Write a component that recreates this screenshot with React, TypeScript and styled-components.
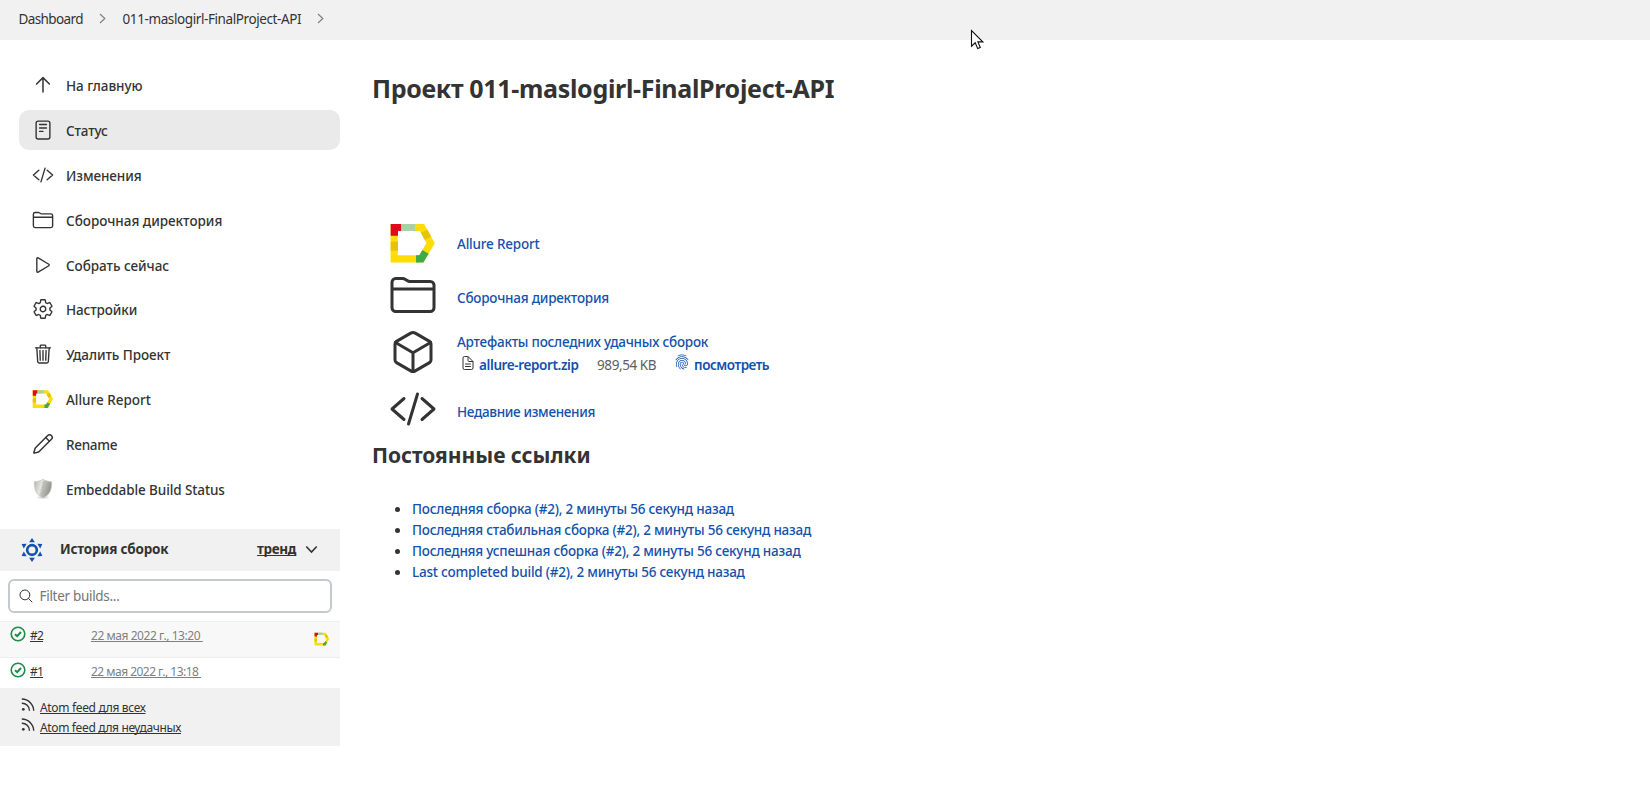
import React from "react";
import styled, { createGlobalStyle } from "styled-components";
import {
  IoCodeSlashOutline,
  IoCubeOutline,
  IoDocumentTextOutline,
  IoFingerPrintOutline,
  IoFolderOutline,
  IoPlayOutline,
  IoReaderOutline,
  IoSearchOutline,
  IoSettingsOutline,
  IoTrashOutline,
} from "react-icons/io5";
import { Pencil } from "lucide-react";

const GlobalStyle = createGlobalStyle`
  body {
    margin: 0;
    background: #fff;
    color: #333;
    font-family: "Noto Sans", "Open Sans", sans-serif;
    font-size: 13.5px;
  }
  * { box-sizing: border-box; }
  svg { display: block; flex: none; }
`;

const Page = styled.div`
  position: relative;
  min-height: 807px;
  overflow: hidden;
`;

const Breadcrumbs = styled.nav`
  display: flex;
  align-items: center;
  height: 40px;
  padding: 0 0 3px 18.5px;
  background: #f1f1f1;
  line-height: 20px;
`;

const Crumb = styled.a<{ $ls: number }>`
  letter-spacing: ${(p) => p.$ls}px;
  white-space: nowrap;
`;

const CrumbSeparator = styled.svg`
  margin: 0 16.5px 1px 16px;
`;

const Columns = styled.div`
  display: flex;
  align-items: flex-start;
`;

const Sidebar = styled.aside`
  width: 340px;
  padding-top: 25px;
`;

const Tasks = styled.div`
  display: flex;
  flex-direction: column;
  gap: 4.9px;
  margin: 0 0 19.9px 19px;
`;

const Task = styled.a<{ $active?: boolean }>`
  display: flex;
  align-items: center;
  gap: 12px;
  height: 40px;
  padding-left: 13px;
  border-radius: 10px;
  background: ${(p) => (p.$active ? "#eaeaea" : "transparent")};
`;

const TaskLabel = styled.span<{ $ls: number }>`
  padding-top: 2px;
  font-weight: 500;
  line-height: 20px;
  letter-spacing: ${(p) => p.$ls}px;
  white-space: nowrap;
`;

const HistoryHeader = styled.div`
  display: flex;
  align-items: center;
  height: 42px;
  padding: 0 22px 0 21px;
  background: #f1f1f1;
  font-weight: 700;
  line-height: 20px;
`;

const HistoryTitle = styled.span`
  padding-bottom: 2px;
  margin-left: 17px;
  letter-spacing: -0.22px;
`;

const Trend = styled.a`
  padding-bottom: 2px;
  margin: 0 9px 0 auto;
  letter-spacing: -0.36px;
  text-decoration: underline;
  text-decoration-skip-ink: none;
`;

const Filter = styled.label`
  display: flex;
  align-items: center;
  gap: 6px;
  height: 34px;
  margin: 8px;
  padding-left: 7.5px;
  border: 2px solid #c3c9ce;
  border-radius: 6px;
  color: #333;
`;

const FilterHint = styled.span`
  padding-top: 1px;
  color: #757575;
  letter-spacing: -0.3px;
`;

const Build = styled.div<{ $height: number; $odd?: boolean }>`
  display: flex;
  align-items: flex-start;
  height: ${(p) => p.$height}px;
  padding: 4px 10px 0;
  border-top: 1px solid #eeeeee;
  background: ${(p) => (p.$odd ? "#f8f8f8" : "#fff")};
  font-size: 12px;
  line-height: 20px;
`;

const BuildNumber = styled.a`
  width: 61px;
  margin-left: 4px;
  letter-spacing: -0.8px;
  text-decoration: underline;
`;

const BuildDate = styled.a<{ $ls: number }>`
  color: #808080;
  letter-spacing: ${(p) => p.$ls}px;
  text-decoration: underline;
  text-decoration-skip-ink: none;
  white-space: pre;
`;

const BuildBadge = styled.span`
  margin: 5px 0 0 auto;
`;

const Feeds = styled.div`
  height: 58px;
  padding: 10px 0 0 21px;
  background: #f1f1f1;
`;

const Feed = styled.a<{ $ls: number }>`
  display: flex;
  gap: 5px;
  height: 20px;
  font-size: 12px;
  line-height: 20px;
  letter-spacing: ${(p) => p.$ls}px;
  text-decoration: underline;
  text-decoration-skip-ink: none;
`;

const Main = styled.main`
  padding: 31px 0 0 32px;
`;

const Title = styled.h1`
  margin: 0 0 111px;
  font-size: 25px;
  font-weight: 700;
  line-height: 34px;
  letter-spacing: -0.315px;
`;

const Subtitle = styled.h2`
  margin: 0 0 29px;
  font-size: 21px;
  font-weight: 700;
  line-height: 30px;
  letter-spacing: -0.03px;
`;

const Summary = styled.div<{ $height: number }>`
  display: flex;
  align-items: center;
  gap: 20px;
  height: ${(p) => p.$height}px;
  padding-left: 17px;
`;

const SummaryIcon = styled.span<{ $lift?: number }>`
  padding-bottom: ${(p) => p.$lift ?? 0}px;
`;

const Link = styled.a<{ $ls: number; $strong?: boolean }>`
  color: #1351ab;
  font-weight: ${(p) => (p.$strong ? 600 : 500)};
  line-height: 23px;
  letter-spacing: ${(p) => p.$ls}px;
  white-space: nowrap;
`;

const SummaryText = styled.div`
  padding-top: 2px;
`;

const Artifact = styled.div`
  display: flex;
  align-items: center;
  height: 24px;
  padding-left: 3px;
`;

const FileIcon = styled.span<{ $blue?: boolean }>`
  padding-bottom: ${(p) => (p.$blue ? 7 : 5)}px;
  margin-right: ${(p) => (p.$blue ? 4 : 3)}px;
  color: ${(p) => (p.$blue ? "#1351ab" : "#333")};
`;

const FileSize = styled.span`
  width: 77px;
  margin-left: 18.5px;
  padding-bottom: 1px;
  color: #5c5c64;
  letter-spacing: -0.43px;
`;

const Permalinks = styled.ul`
  margin: 0;
  padding: 0 0 0 23px;
  list-style: none;
`;

const Permalink = styled.li`
  display: flex;
  align-items: center;
  gap: 12px;
  height: 21px;
  &::before {
    content: "";
    width: 5px;
    height: 5px;
    border-radius: 50%;
    background: #333;
  }
`;

const Pointer = styled.svg`
  position: absolute;
  left: 970px;
  top: 29px;
`;

const AllureIcon = ({ size }: { size: number }) => (
  <svg width={size} height={size} viewBox="57 27 144 144" fill="none">
    <path d="M72.5 52.5H156L182 99.5L154 146.5H72.5Z" stroke="#ffdc05" strokeWidth="21.5" />
    <path d="M62 42H93V63H84V77H62Z" fill="#e0081a" />
    <path d="M93 42H135V63H93Z" fill="#a5d3a2" />
    <path d="M62 95H84V122H62Z" fill="#e4c40a" />
    <path d="M162.500 64L174 85" stroke="#e4c40a" strokeWidth="21.5" />
    <path d="M138 146.500H154L166.500 125.500" stroke="#3fab45" strokeWidth="21.5" />
  </svg>
);

const UpIcon = () => (
  <svg width="22" height="22" viewBox="0 0 22 22" fill="none" stroke="#333" strokeWidth="1.500" strokeLinecap="round" strokeLinejoin="round">
    <path d="M4.600 10L11 3.600L17.400 10M11 4V18" />
  </svg>
);

const ShieldIcon = () => (
  <svg width="22" height="22" viewBox="0 0 22 22">
    <defs>
      <linearGradient id="shield" x1="0" x2="1" y1="0" y2="0.3">
        <stop offset="0" stopColor="#b4b4ae" />
        <stop offset="0.45" stopColor="#e6e6e1" />
        <stop offset="0.55" stopColor="#c4c4be" />
        <stop offset="1" stopColor="#92928d" />
      </linearGradient>
    </defs>
    <ellipse cx="11" cy="19.500" rx="6" ry="1.500" fill="#e3e3e3" />
    <path
      d="M11 1.300C8.500 3 5 3.700 2.300 3.700C2.300 10 3 16.500 11 20C19 16.500 19.700 10 19.700 3.700C17 3.700 13.500 3 11 1.300Z"
      fill="url(#shield)"
      stroke="#c9c9c5"
      strokeWidth="0.8"
    />
    <path d="M11 4V17" stroke="#a2a29d" strokeWidth="0.8" strokeDasharray="1 1.500" />
  </svg>
);

const HistoryIcon = () => (
  <svg width="22" height="24" viewBox="-33 -36 66 72">
    <circle r="14.500" fill="none" stroke="#1351ab" strokeWidth="8" />
    {[0, 60, 120, 180, 240, 300].map((angle) => (
      <path key={angle} d="M0 -36L8.500 -23.500H-8.500Z" fill="#1351ab" transform={`rotate(${angle})`} />
    ))}
  </svg>
);

const SuccessIcon = () => (
  <svg width="16" height="16" viewBox="0 0 16 16" fill="none" stroke="#1e8a4a">
    <circle cx="8" cy="8" r="6.800" strokeWidth="1.600" />
    <path d="M5 8.200L7.200 10.200L11 6" strokeWidth="2" />
  </svg>
);

const FeedIcon = () => (
  <svg width="14" height="14" viewBox="0 0 14 14" fill="none" stroke="#333" strokeWidth="1.400">
    <circle cx="2.300" cy="11.300" r="1.400" fill="#333" stroke="none" />
    <path d="M0.800 5.200A7.500 7.500 0 0 1 8.500 12.700" />
    <path d="M0.800 1A12 12 0 0 1 12.700 12.700" />
  </svg>
);

const Separator = () => (
  <CrumbSeparator width="7" height="11" viewBox="0 0 7 11" fill="none" stroke="#808080" strokeWidth="1.200">
    <path d="M1 1L5.800 5.500L1 10" />
  </CrumbSeparator>
);

const tasks = [
  { label: "На главную", ls: -0.05, icon: <UpIcon /> },
  { label: "Статус", ls: -0.15, icon: <IoReaderOutline size={22} stroke="#333" strokeWidth={10} />, active: true },
  { label: "Изменения", ls: -0.08, icon: <IoCodeSlashOutline size={22} /> },
  { label: "Сборочная директория", ls: -0.01, icon: <IoFolderOutline size={22} /> },
  { label: "Собрать сейчас", ls: -0.05, icon: <IoPlayOutline size={22} /> },
  { label: "Настройки", ls: -0.1, icon: <IoSettingsOutline size={22} /> },
  { label: "Удалить Проект", ls: -0.07, icon: <IoTrashOutline size={22} /> },
  { label: "Allure Report", ls: -0.02, icon: <AllureIcon size={22} /> },
  { label: "Rename", ls: -0.3, icon: <Pencil size={22} strokeWidth={1.6} /> },
  { label: "Embeddable Build Status", ls: -0.1, icon: <ShieldIcon /> },
];

const permalinks = [
  { label: "Последняя сборка (#2), 2 минуты 56 секунд назад", ls: -0.21 },
  { label: "Последняя стабильная сборка (#2), 2 минуты 56 секунд назад", ls: -0.235 },
  { label: "Последняя успешная сборка (#2), 2 минуты 56 секунд назад", ls: -0.225 },
  { label: "Last completed build (#2), 2 минуты 56 секунд назад", ls: -0.22 },
];

export default function App() {
  return (
    <Page>
      <GlobalStyle />
      <Breadcrumbs>
        <Crumb $ls={-0.6}>Dashboard</Crumb>
        <Separator />
        <Crumb $ls={-0.4}>011-maslogirl-FinalProject-API</Crumb>
        <Separator />
      </Breadcrumbs>
      <Columns>
        <Sidebar>
          <Tasks>
            {tasks.map((task) => (
              <Task key={task.label} $active={task.active}>
                {task.icon}
                <TaskLabel $ls={task.ls}>{task.label}</TaskLabel>
              </Task>
            ))}
          </Tasks>
          <HistoryHeader>
            <HistoryIcon />
            <HistoryTitle>История сборок</HistoryTitle>
            <Trend>тренд</Trend>
            <svg width="13" height="9" viewBox="0 0 13 9" fill="none" stroke="#333" strokeWidth="1.600">
              <path d="M1.300 1.500L6.500 7L11.700 1.500" />
            </svg>
          </HistoryHeader>
          <Filter>
            <IoSearchOutline size={16} />
            <FilterHint>Filter builds...</FilterHint>
          </Filter>
          <Build $height={36} $odd>
            <SuccessIcon />
            <BuildNumber>#2</BuildNumber>
            <BuildDate $ls={-0.44}>{"22 мая 2022 г., 13:20 "}</BuildDate>
            <BuildBadge>
              <AllureIcon size={16} />
            </BuildBadge>
          </Build>
          <Build $height={31}>
            <SuccessIcon />
            <BuildNumber>#1</BuildNumber>
            <BuildDate $ls={-0.52}>{"22 мая 2022 г., 13:18 "}</BuildDate>
          </Build>
          <Feeds>
            <Feed $ls={-0.334}>
              <FeedIcon />
              Atom feed для всех
            </Feed>
            <Feed $ls={-0.357}>
              <FeedIcon />
              Atom feed для неудачных
            </Feed>
          </Feeds>
        </Sidebar>
        <Main>
          <Title>Проект 011-maslogirl-FinalProject-API</Title>
          <Summary $height={54}>
            <AllureIcon size={48} />
            <SummaryText>
              <Link $ls={-0.2}>Allure Report</Link>
            </SummaryText>
          </Summary>
          <Summary $height={54}>
            <SummaryIcon $lift={4}>
              <IoFolderOutline size={48} />
            </SummaryIcon>
            <SummaryText>
              <Link $ls={-0.225}>Сборочная директория</Link>
            </SummaryText>
          </Summary>
          <Summary $height={58}>
            <SummaryIcon $lift={2}>
              <IoCubeOutline size={48} />
            </SummaryIcon>
            <SummaryText>
              <Link $ls={-0.235}>Артефакты последних удачных сборок</Link>
              <Artifact>
                <FileIcon>
                  <IoDocumentTextOutline size={16} />
                </FileIcon>
                <Link $ls={-0.385} $strong>allure-report.zip</Link>
                <FileSize>989,54 KB</FileSize>
                <FileIcon $blue>
                  <IoFingerPrintOutline size={16} />
                </FileIcon>
                <Link $ls={-0.47} $strong>посмотреть</Link>
              </Artifact>
            </SummaryText>
          </Summary>
          <Summary $height={58}>
            <SummaryIcon $lift={5}>
              <IoCodeSlashOutline size={48} />
            </SummaryIcon>
            <SummaryText>
              <Link $ls={-0.33}>Недавние изменения</Link>
            </SummaryText>
          </Summary>
          <Subtitle>Постоянные ссылки</Subtitle>
          <Permalinks>
            {permalinks.map((item) => (
              <Permalink key={item.label}>
                <Link $ls={item.ls}>{item.label}</Link>
              </Permalink>
            ))}
          </Permalinks>
        </Main>
      </Columns>
      <Pointer width="14" height="21" viewBox="0 0 14 21">
        <path
          d="M1.500 1.500V17.200L5.200 13.800L7.700 19.600L10.300 18.500L7.900 12.900H12.800Z"
          fill="#fff"
          stroke="#111"
          strokeWidth="1.100"
        />
      </Pointer>
    </Page>
  );
}
